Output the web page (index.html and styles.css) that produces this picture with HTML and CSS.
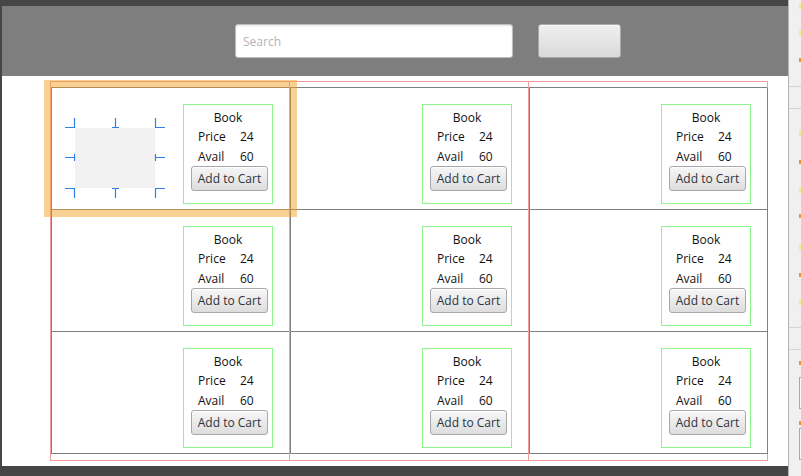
FILE: index.html
```html
<!DOCTYPE html>
<html>
<head>
<meta charset="utf-8">
<link rel="stylesheet" href="styles.css">
</head>
<body>
<div class="stage">
  <div class="window">
    <div class="header">
      <div class="search"><span class="placeholder">Search</span></div>
      <div class="hbtn"></div>
    </div>
    <div class="content">
      <div class="gridpane">
        <div class="guide guide-1"></div>
        <div class="guide guide-2"></div>
        <div class="grid">
          <div class="cell cell-selected">
            <svg class="imgview" width="100" height="80" viewBox="0 0 100 80">
              <rect x="10" y="10" width="80" height="60" fill="#f2f2f2"/>
              <path d="M0 9.5H10M9.5 0V10M47 9.5H54M50.5 0V10M90 9.5H100M90.5 0V10M0 39.5H10M9.5 36V43M90 39.5H100M90.5 36V43M0 70.5H10M9.5 70V80M47 70.5H54M50.5 70V80M90 70.5H100M90.5 70V80" stroke="#2f7fec" stroke-width="1.2" fill="none"/>
            </svg>
            <div class="card">
              <div class="card-title">Book</div>
              <div class="card-row"><span class="lbl">Price</span><span>24</span></div>
              <div class="card-row card-row-last"><span class="lbl">Avail</span><span>60</span></div>
              <div class="card-btn">Add to Cart</div>
            </div>
            <div class="selection"></div>
          </div>
          <div class="cell">
            <div class="card">
              <div class="card-title">Book</div>
              <div class="card-row"><span class="lbl">Price</span><span>24</span></div>
              <div class="card-row card-row-last"><span class="lbl">Avail</span><span>60</span></div>
              <div class="card-btn">Add to Cart</div>
            </div>
          </div>
          <div class="cell cell-last">
            <div class="card">
              <div class="card-title">Book</div>
              <div class="card-row"><span class="lbl">Price</span><span>24</span></div>
              <div class="card-row card-row-last"><span class="lbl">Avail</span><span>60</span></div>
              <div class="card-btn">Add to Cart</div>
            </div>
          </div>
          <div class="cell">
            <div class="card">
              <div class="card-title">Book</div>
              <div class="card-row"><span class="lbl">Price</span><span>24</span></div>
              <div class="card-row card-row-last"><span class="lbl">Avail</span><span>60</span></div>
              <div class="card-btn">Add to Cart</div>
            </div>
          </div>
          <div class="cell">
            <div class="card">
              <div class="card-title">Book</div>
              <div class="card-row"><span class="lbl">Price</span><span>24</span></div>
              <div class="card-row card-row-last"><span class="lbl">Avail</span><span>60</span></div>
              <div class="card-btn">Add to Cart</div>
            </div>
          </div>
          <div class="cell cell-last">
            <div class="card">
              <div class="card-title">Book</div>
              <div class="card-row"><span class="lbl">Price</span><span>24</span></div>
              <div class="card-row card-row-last"><span class="lbl">Avail</span><span>60</span></div>
              <div class="card-btn">Add to Cart</div>
            </div>
          </div>
          <div class="cell">
            <div class="card">
              <div class="card-title">Book</div>
              <div class="card-row"><span class="lbl">Price</span><span>24</span></div>
              <div class="card-row card-row-last"><span class="lbl">Avail</span><span>60</span></div>
              <div class="card-btn">Add to Cart</div>
            </div>
          </div>
          <div class="cell">
            <div class="card">
              <div class="card-title">Book</div>
              <div class="card-row"><span class="lbl">Price</span><span>24</span></div>
              <div class="card-row card-row-last"><span class="lbl">Avail</span><span>60</span></div>
              <div class="card-btn">Add to Cart</div>
            </div>
          </div>
          <div class="cell cell-last">
            <div class="card">
              <div class="card-title">Book</div>
              <div class="card-row"><span class="lbl">Price</span><span>24</span></div>
              <div class="card-row card-row-last"><span class="lbl">Avail</span><span>60</span></div>
              <div class="card-btn">Add to Cart</div>
            </div>
          </div>
        </div>
      </div>
    </div>
  </div>
</div>
<div class="side">
  <div class="mk y m3"></div>
  <div class="mk y m21"></div>
  <div class="mk o m22"></div>
  <div class="sline m24"></div>
  <div class="sline m21"></div>
  <div class="mk y m21"></div>
  <div class="mk o m24"></div>
  <div class="mk y m23"></div>
  <div class="mk o m21"></div>
  <div class="mk y m26"></div>
  <div class="mk o m23"></div>
  <div class="mk y m22"></div>
  <div class="sline m22"></div>
  <div class="sline m21"></div>
  <div class="mk o m11"></div>
  <div class="sbox m12"></div>
  <div class="mk o m12"></div>
  <div class="sbox m3"></div>
</div>
</body>
</html>
```
FILE: styles.css
```css
html, body {
  margin: 0;
  padding: 0;
}
body {
  width: 801px;
  height: 476px;
  overflow: hidden;
  display: flex;
  background: #464646;
  font-family: "Open Sans", "Noto Sans", sans-serif;
  font-size: 12px;
  color: #111;
}
.stage {
  width: 788px;
  height: 476px;
  box-sizing: border-box;
  padding: 6px 0 10px 2px;
  display: flex;
}
.window {
  flex: 1;
  display: flex;
  flex-direction: column;
  background: #ffffff;
}
.header {
  height: 70px;
  flex: none;
  background: #7f7e7e;
  display: flex;
  align-items: center;
  padding-left: 233px;
  gap: 25px;
}
.search {
  width: 278px;
  height: 34px;
  box-sizing: border-box;
  background: #fff;
  border: 1px solid #bdbdbd;
  border-radius: 3px;
  box-shadow: inset 0 1px 2px rgba(0,0,0,0.10);
  display: flex;
  align-items: center;
  padding-left: 7px;
}
.placeholder {
  color: #b4b4b4;
  font-size: 12px;
}
.hbtn {
  width: 83px;
  height: 34px;
  box-sizing: border-box;
  border: 1px solid #a9a9a9;
  border-radius: 3px;
  background: linear-gradient(#f0f0f0, #d9d9d9);
  box-shadow: inset 0 1px 0 #fafafa;
}
.content {
  flex: 1;
  padding: 5px 0 0 48px;
}
.gridpane {
  position: relative;
  width: 718px;
  height: 380px;
  box-sizing: border-box;
  border: 1px solid #f59a9a;
  padding-top: 5px;
}
.guide {
  position: absolute;
  top: 0;
  bottom: 0;
  width: 1px;
  background: #f59a9a;
}
.guide-1 { left: 238px; }
.guide-2 { left: 477px; }
.grid {
  display: grid;
  grid-template-columns: 239px 239px 238px;
  grid-template-rows: 122px 122px 122px;
  border-left: 1px solid #808080;
  border-top: 1px solid #808080;
}
.cell {
  box-sizing: border-box;
  border-right: 1px solid #808080;
  border-bottom: 1px solid #808080;
  display: flex;
  justify-content: flex-end;
  align-items: flex-start;
  padding: 16px 17px 0 0;
}
.cell-last {
  padding-right: 16px;
}
.cell-selected {
  position: relative;
}
.imgview {
  display: block;
  margin: 14px auto 0 13px;
}
.selection {
  position: absolute;
  left: -8px;
  top: -8px;
  width: 253px;
  height: 137px;
  box-sizing: border-box;
  border-style: solid;
  border-color: rgba(240, 160, 30, 0.47);
  border-width: 8px 7px 8px 8px;
}
.card {
  width: 90px;
  height: 100px;
  box-sizing: border-box;
  border: 1px solid #8cf58c;
  padding-top: 4px;
  display: flex;
  flex-direction: column;
}
.card-title {
  text-align: center;
  line-height: 18px;
  height: 18px;
}
.card-row {
  display: flex;
  line-height: 20px;
  height: 20px;
  padding-left: 14px;
}
.card-row-last {
  height: 19px;
}
.lbl {
  width: 42px;
}
.card-btn {
  margin-left: 7px;
  width: 77px;
  height: 25px;
  box-sizing: border-box;
  border: 1px solid #a8a8a8;
  border-radius: 3px;
  background: linear-gradient(#f7f7f7, #dddddd);
  box-shadow: inset 0 1px 0 #ffffff;
  color: #2c3440;
  text-align: center;
  line-height: 24px;
  white-space: nowrap;
}
.side {
  width: 12px;
  height: 476px;
  border-left: 1px solid #b4b4b4;
  background: #f0f0f0;
  display: flex;
  flex-direction: column;
}
.mk {
  width: 2px;
  align-self: flex-end;
}
.mk.y { height: 6px; background: #eeee90; }
.mk.o { height: 4px; background: #e8963a; }
.sline {
  height: 1px;
  background: #d4d4d4;
}
.sbox {
  height: 32px;
  width: 2px;
  align-self: flex-end;
  box-sizing: border-box;
  border: 1px solid #a8a8a8;
  border-right: none;
  background: #fafafa;
}
.m3 { margin-top: 3px; }
.m11 { margin-top: 11px; }
.m12 { margin-top: 12px; }
.m21 { margin-top: 21px; }
.m22 { margin-top: 22px; }
.m23 { margin-top: 23px; }
.m24 { margin-top: 24px; }
.m26 { margin-top: 26px; }
```
